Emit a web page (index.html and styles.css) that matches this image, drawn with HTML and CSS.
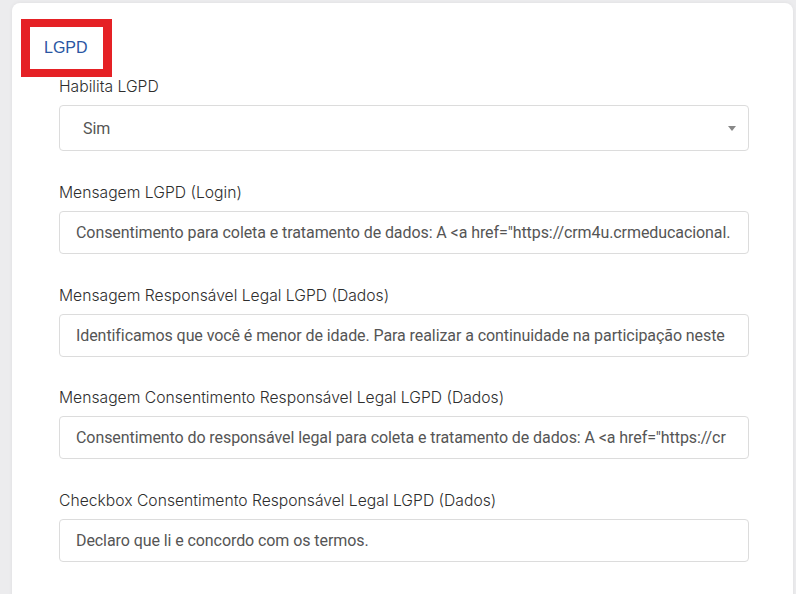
FILE: index.html
```html
<!DOCTYPE html>
<html lang="pt-BR">
<head>
    <meta charset="UTF-8">
    <meta name="viewport" content="width=device-width, initial-scale=1.0">
    <title>Configurações - LGPD</title>
    <link rel="stylesheet" href="styles.css">
</head>
<body>
    <div class="card">
        <div class="tab-title">LGPD</div>

        <div class="form-body">
            <!-- Habilita -->
            <div class="form-group select-group">
                <label class="form-label">Habilita LGPD</label>
                <div class="form-select">
                    <span class="field-text">Sim</span>
                    <span class="select-arrow"></span>
                </div>
            </div>

            <div class="form-group">
                <label class="form-label">Mensagem LGPD (Login)</label>
                <div class="form-input">
                    <div class="field-text">Consentimento para coleta e tratamento de dados: A &lt;a href="https://crm4u.crmeducacional.</div>
                </div>
            </div>

            <div class="form-group">
                <label class="form-label">Mensagem Responsável Legal LGPD (Dados)</label>
                <div class="form-input">
                    <div class="field-text">Identificamos que você é menor de idade. Para realizar a continuidade na participação neste</div>
                </div>
            </div>

            <div class="form-group">
                <label class="form-label">Mensagem Consentimento Responsável Legal LGPD (Dados)</label>
                <div class="form-input">
                    <div class="field-text">Consentimento do responsável legal para coleta e tratamento de dados: A &lt;a href="https://cr</div>
                </div>
            </div>

            <div class="form-group">
                <label class="form-label">Checkbox Consentimento Responsável Legal LGPD (Dados)</label>
                <div class="form-input">
                    <div class="field-text">Declaro que li e concordo com os termos.</div>
                </div>
            </div>
        </div>
    </div>
</body>
</html>
```

FILE: styles.css
```css
* {
    margin: 0;
    padding: 0;
    box-sizing: border-box;
}

body {
    font-family: Inter, 'Noto Sans', sans-serif;
    background: #ececee;
    padding: 3px 3px 0 12px;
    height: 594px;
    overflow: hidden;
}

.card {
    background: white;
    border-radius: 8px;
    box-shadow: 0 0 4px rgba(0,0,0,0.06);
    padding: 16px 44px 0 9px;
    height: calc(100% + 20px);
}

.tab-title {
    display: inline-block;
    border: 8px solid #e52125;
    border-left-width: 9px;
    border-right-width: 9px;
    padding: 0 15px 0 14px;
    line-height: 42px;
    font-family: 'Liberation Sans', Arial, sans-serif;
    font-size: 16px;
    color: #2a56a3;
}

.form-body {
    padding-left: 38px;
}

.form-group {
    margin-bottom: 31.5px;
}

.select-group {
    margin-bottom: 32px;
}

.form-label {
    display: block;
    font-size: 15.7px;
    font-weight: 350;
    line-height: 20px;
    color: #2e2e2e;
    margin-bottom: 8px;
}

.form-input,
.form-select {
    height: 43px;
    border: 1px solid #dcdcdc;
    border-radius: 4px;
    padding: 0 16px;
    display: flex;
    align-items: center;
    font-family: Roboto, Arial, sans-serif;
    font-size: 16px;
    letter-spacing: -0.08px;
    color: #555;
}

.form-select {
    height: 46px;
    padding-left: 23px;
    justify-content: space-between;
    padding-right: 12px;
}

.field-text {
    white-space: nowrap;
    overflow: hidden;
    flex: 1;
}

.select-arrow {
    width: 0;
    height: 0;
    border-left: 4px solid transparent;
    border-right: 4px solid transparent;
    border-top: 5px solid #888;
}
```
